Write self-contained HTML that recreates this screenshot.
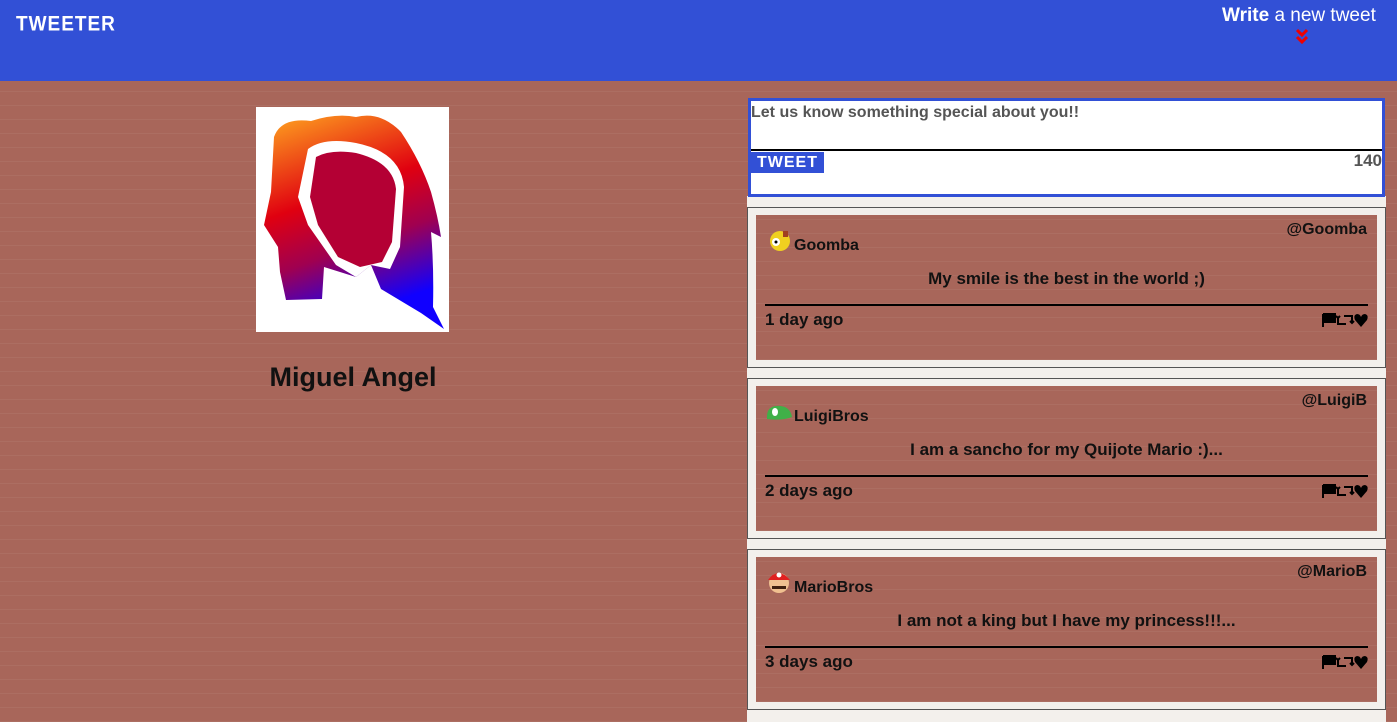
<!DOCTYPE html>
<html><head><meta charset="utf-8"><style>
*{box-sizing:border-box;margin:0;padding:0}
body{width:1397px;height:722px;overflow:hidden;font-family:"Liberation Sans",sans-serif;
background-color:#a8665a;
background-image:repeating-linear-gradient(0deg,rgba(255,255,255,0.05) 0 1px,transparent 1px 14px);position:relative}
.hdr{position:absolute;left:0;top:0;width:1397px;height:81px;background:#3250d6}
.logo{position:absolute;left:16px;top:14px;color:#fff;font-weight:900;font-size:19px;letter-spacing:1px;transform:scaleY(1.1)}
.write{position:absolute;left:1222px;top:5px;color:#fff;font-size:19px}
.write b{font-weight:bold}
.chev{position:absolute;left:1295px;top:28px}
.av{position:absolute;left:256px;top:107px;width:193px;height:225px;background:#fff}
.name{position:absolute;left:200px;width:306px;top:362px;text-align:center;font-size:27px;font-weight:bold;color:#111}
.col{position:absolute;left:747px;top:196px;width:639px;height:526px;background:#f3f0ec}
.form{position:absolute;left:748px;top:98px;width:637px;height:99px;background:#fff;border:3px solid #3250d6}
.form .ph{position:absolute;left:0;top:3px;font-size:16px;font-weight:bold;color:#555}
.form .ln{position:absolute;left:0;right:0;top:48px;height:2px;background:#000}
.form .btn{position:absolute;left:0;top:51px;width:73px;height:21px;background:#3250d6;color:#fff;font-weight:900;font-size:16px;padding-left:6px;line-height:21px;letter-spacing:1px}
.form .cnt{position:absolute;right:0;top:50px;font-weight:900;font-size:17px;color:#555}
.tw{position:absolute;left:747px;width:639px;height:161px;border:1px solid #555;background:#f3f0ec;padding:7px 8px}
.in{position:relative;height:100%;background:#a8665a;
background-image:repeating-linear-gradient(0deg,rgba(255,255,255,0.05) 0 1px,transparent 1px 14px);color:#111}
.in .nm{position:absolute;left:38px;top:22px;font-size:16px;font-weight:bold}
.in .ic{position:absolute;left:10px;top:11px;width:26px;height:26px}
.in .hd{position:absolute;right:10px;top:6px;font-size:16px;font-weight:bold}
.in .tx{position:absolute;left:0;right:0;top:54px;text-align:center;font-size:17px;font-weight:bold}
.in .ln{position:absolute;left:9px;right:9px;top:89px;height:2px;background:#000}
.in .dt{position:absolute;left:9px;top:95px;font-size:17px;font-weight:bold}
.in .act{position:absolute;right:9px;top:97px;width:46px;height:16px}
</style></head><body>
<div class="hdr"><div class="logo">TWEETER</div><div class="write"><b>Write</b> a new tweet</div>
<svg class="chev" width="14" height="18" viewBox="0 0 14 18"><path d="M2 2 L7 7 L12 2 M2 9 L7 14 L12 9" stroke="#e00" stroke-width="3" fill="none"/></svg></div>
<div class="av"><svg width="193" height="225" viewBox="0 0 193 225"><defs><linearGradient id="g" x1="0" y1="0" x2="0.3" y2="1"><stop offset="0" stop-color="#ffa820"/><stop offset="0.45" stop-color="#e00010"/><stop offset="0.7" stop-color="#a00050"/><stop offset="1" stop-color="#1000ff"/></linearGradient></defs>
<path d="M18 30 Q25 10 55 14 Q80 6 100 10 Q125 4 145 25 Q165 55 175 85 Q182 110 185 130 L175 125 Q178 160 177 200 L188 222 L165 206 L125 182 L115 158 L100 170 L68 160 L66 192 L30 193 L24 165 L22 140 L8 118 L15 85 Z" fill="url(#g)"/>
<path d="M52 42 Q68 30 100 36 Q145 45 148 80 L144 140 L134 162 L115 158 L100 170 L80 158 L52 118 L42 90 Z" fill="#fff"/>
<path d="M60 50 Q75 42 100 46 Q137 55 140 82 L136 135 L126 155 L104 160 L82 150 L62 118 L54 90 Z" fill="#b40034"/></svg></div>
<div class="name">Miguel Angel</div>
<div class="col"></div>
<div class="form"><div class="ph">Let us know something special about you!!</div><div class="ln"></div><div class="btn">TWEET</div><div class="cnt">140</div></div>
<div class="tw" style="top:207px"><div class="in"><svg class="ic" viewBox="0 0 26 26"><circle cx="14" cy="15" r="10" fill="#f0d020"/><circle cx="10" cy="16" r="4" fill="#fff"/><circle cx="10" cy="16" r="1.5" fill="#000"/><rect x="17" y="5" width="5" height="6" fill="#a04020"/></svg><div class="nm">Goomba</div><div class="hd">@Goomba</div><div class="tx">My smile is the best in the world ;)</div><div class="ln"></div><div class="dt">1 day ago</div><svg class="act" viewBox="0 0 46 16"><path d="M1 2 V15 M2 2 H13 V10 H2 Z" stroke="#000" stroke-width="2" fill="#000"/><path d="M16 6 V12 H24 M18 4 L16 6 L14 4 M22 4 H30 V11 M28 9 L30 11 L32 9" stroke="#000" stroke-width="2" fill="none"/><path d="M39 15 L33 8 Q31 3 35 2 Q38 2 39 5 Q40 2 43 2 Q47 3 45 8 Z" fill="#000"/></svg></div></div>
<div class="tw" style="top:378px"><div class="in"><svg class="ic" viewBox="0 0 26 26"><path d="M1 22 Q0 10 10 9 Q24 8 26 20 Q16 24 1 22 Z" fill="#40b048"/><ellipse cx="9" cy="15" rx="3" ry="4" fill="#fff"/></svg><div class="nm">LuigiBros</div><div class="hd">@LuigiB</div><div class="tx">I am a sancho for my Quijote Mario :)...</div><div class="ln"></div><div class="dt">2 days ago</div><svg class="act" viewBox="0 0 46 16"><path d="M1 2 V15 M2 2 H13 V10 H2 Z" stroke="#000" stroke-width="2" fill="#000"/><path d="M16 6 V12 H24 M18 4 L16 6 L14 4 M22 4 H30 V11 M28 9 L30 11 L32 9" stroke="#000" stroke-width="2" fill="none"/><path d="M39 15 L33 8 Q31 3 35 2 Q38 2 39 5 Q40 2 43 2 Q47 3 45 8 Z" fill="#000"/></svg></div></div>
<div class="tw" style="top:549px"><div class="in"><svg class="ic" viewBox="0 0 26 26"><circle cx="13" cy="15" r="10" fill="#f0c090"/><path d="M2 12 Q12 -2 24 12 Z" fill="#e02020"/><circle cx="13" cy="7" r="2.5" fill="#fff"/><rect x="6" y="18" width="14" height="3" fill="#402010"/></svg><div class="nm">MarioBros</div><div class="hd">@MarioB</div><div class="tx">I am not a king but I have my princess!!!...</div><div class="ln"></div><div class="dt">3 days ago</div><svg class="act" viewBox="0 0 46 16"><path d="M1 2 V15 M2 2 H13 V10 H2 Z" stroke="#000" stroke-width="2" fill="#000"/><path d="M16 6 V12 H24 M18 4 L16 6 L14 4 M22 4 H30 V11 M28 9 L30 11 L32 9" stroke="#000" stroke-width="2" fill="none"/><path d="M39 15 L33 8 Q31 3 35 2 Q38 2 39 5 Q40 2 43 2 Q47 3 45 8 Z" fill="#000"/></svg></div></div>
</body></html>
